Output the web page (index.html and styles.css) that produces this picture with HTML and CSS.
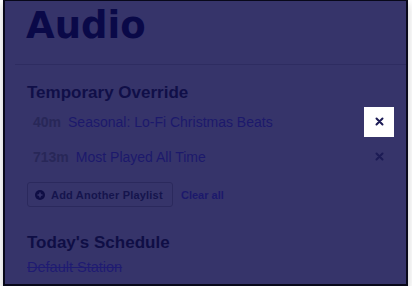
FILE: index.html
```html
<!DOCTYPE html>
<html lang="en">
<head>
    <meta charset="UTF-8">
    <meta name="viewport" content="width=device-width, initial-scale=1.0">
    <title>Audio</title>
    <link rel="stylesheet" href="styles.css">
</head>
<body>
    <div class="panel">
        <div class="panel-header">
            <h1>Audio</h1>
        </div>

        <div class="section">
            <h2>Temporary Override</h2>
            <ul class="playlists">
                <li class="playlist">
                    <span class="duration">40m</span>
                    <span class="name">Seasonal: Lo-Fi Christmas Beats</span>
                    <button class="remove focused" aria-label="Remove">
                        <svg width="9" height="9" viewBox="0 0 9 9"><path d="M1.5 1.5l6 6M7.5 1.5l-6 6" stroke="currentColor" stroke-width="2" stroke-linecap="round"/></svg>
                    </button>
                </li>
                <li class="playlist">
                    <span class="duration">713m</span>
                    <span class="name">Most Played All Time</span>
                    <button class="remove" aria-label="Remove">
                        <svg width="9" height="9" viewBox="0 0 9 9"><path d="M1.5 1.5l6 6M7.5 1.5l-6 6" stroke="currentColor" stroke-width="2" stroke-linecap="round"/></svg>
                    </button>
                </li>
            </ul>

            <div class="actions">
                <button class="add-btn">
                    <svg width="10" height="10" viewBox="0 0 10 10"><circle cx="5" cy="5" r="5" fill="currentColor"/><path d="M5 2.5v5M2.5 5h5" stroke="#36346a" stroke-width="1.6"/></svg>
                    Add Another Playlist
                </button>
                <a href="#" class="clear-link">Clear all</a>
            </div>

            <h2 class="schedule-title">Today's Schedule</h2>
            <div class="station">Default Station</div>
        </div>
    </div>
</body>
</html>
```

FILE: styles.css
```css
body {
    margin: 0;
    background-color: #ffffff;
    font-family: "Liberation Sans", Arial, sans-serif;
}

.panel {
    margin-left: 3px;
    width: 401px;
    height: 283px;
    background-color: #36346a;
    border: 2px solid #08081a;
    border-top-width: 1px;
    box-shadow: 0 4px 8px rgba(0, 0, 0, 0.22);
}

.panel-header {
    margin-left: 10px;
    padding-left: 11px;
    padding-bottom: 14px;
    border-bottom: 1px solid #2e2c61;
}

h1 {
    margin: 0;
    padding-top: 1px;
    font-family: "DejaVu Sans", sans-serif;
    font-size: 37px;
    line-height: 48px;
    font-weight: bold;
    color: #0a0948;
}

.section {
    padding: 0 12px 0 22px;
}

h2 {
    margin: 18px 0 0;
    font-size: 17px;
    line-height: 20px;
    font-weight: bold;
    color: #100f48;
}

.playlists {
    list-style: none;
    margin: 1px 0 0;
    padding: 0;
}

.playlist {
    display: flex;
    align-items: center;
    height: 35px;
    padding-left: 6px;
    font-size: 14px;
}

.duration {
    font-weight: bold;
    color: #282758;
    margin-right: 7px;
}

.name {
    flex: 1;
    color: #1c196c;
}

.remove {
    width: 30px;
    height: 30px;
    border: none;
    padding: 0;
    background: transparent;
    color: #1c1b55;
    display: flex;
    align-items: center;
    justify-content: center;
}

.remove.focused {
    background-color: #ffffff;
}

.actions {
    display: flex;
    align-items: center;
    margin-top: 8px;
}

.add-btn {
    display: flex;
    align-items: center;
    gap: 6px;
    height: 25px;
    width: 146px;
    padding: 0 0 0 7px;
    background: transparent;
    border: 1px solid #2b295d;
    border-radius: 3px;
    font-family: "Liberation Sans", Arial, sans-serif;
    font-size: 11px;
    font-weight: bold;
    letter-spacing: 0.2px;
    color: #15144d;
}

.add-btn svg {
    color: #0f0e45;
}

.clear-link {
    margin-left: 8px;
    font-size: 11px;
    font-weight: bold;
    color: #1c196c;
    text-decoration: none;
}

.schedule-title {
    margin-top: 26px;
    color: #0f0e45;
}

.station {
    margin-top: 5px;
    font-size: 14.5px;
    line-height: 18px;
    color: #1f1b72;
    text-decoration: line-through;
}
```
